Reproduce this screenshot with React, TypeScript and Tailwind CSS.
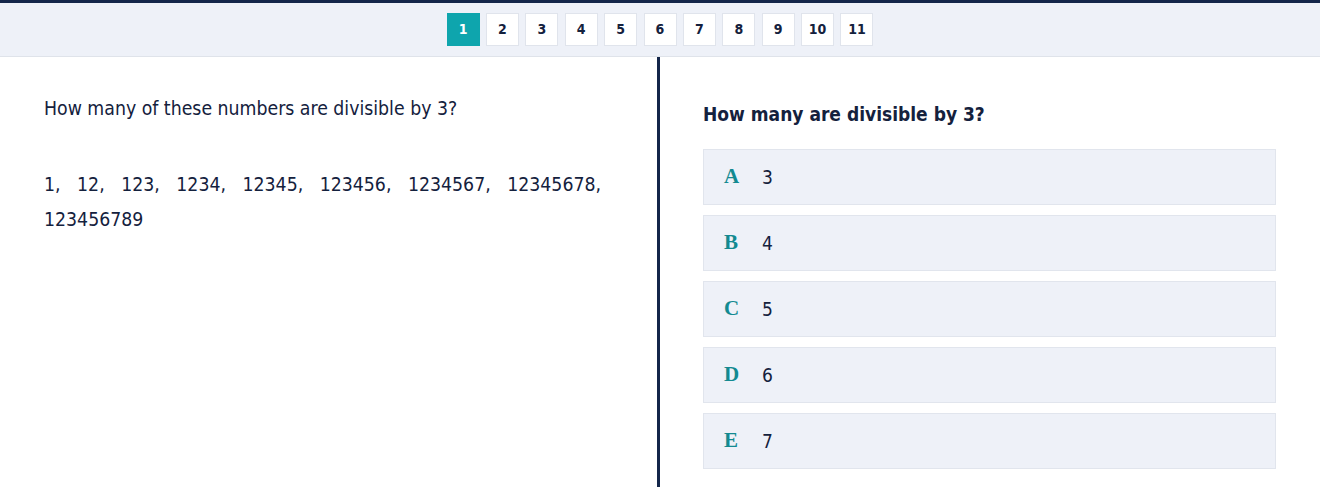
const pages = ["1", "2", "3", "4", "5", "6", "7", "8", "9", "10", "11"];

const options = [
  { letter: "A", value: "3" },
  { letter: "B", value: "4" },
  { letter: "C", value: "5" },
  { letter: "D", value: "6" },
  { letter: "E", value: "7" },
];

const numbers = ["1", "12", "123", "1234", "12345", "123456", "1234567", "12345678", "123456789"];

const sans = "font-['DejaVu_Sans_Condensed','DejaVu_Sans',sans-serif]";

export default function App() {
  return (
    <div className={`h-[487px] w-full overflow-hidden border-t-[3px] border-[#14264a] bg-white text-[#14213d] ${sans}`}>
      {/* Page navigation */}
      <div className="flex h-[54px] items-center justify-center gap-[6.4px] border-b border-[#dfe3ea] bg-[#eef1f8]">
        {pages.map((p) => (
          <button
            key={p}
            type="button"
            className={
              p === "1"
                ? "flex h-[33px] w-[33px] items-center justify-center border border-[#0ea5ad] bg-[#0ea5ad] text-[14px] font-bold text-white"
                : "flex h-[33px] w-[33px] items-center justify-center border border-[#e0e4ec] bg-white text-[14px] font-bold text-[#14213d]"
            }
          >
            {p}
          </button>
        ))}
      </div>

      <div className="flex h-full">
        {/* Question */}
        <div className="w-[657px] shrink-0 pl-[44px] pr-[20px] pt-[38px]">
          <p className="text-[19.3px] leading-[28px]">How many of these numbers are divisible by 3?</p>
          <p className="mt-[44px] text-[19.3px] leading-[35px]">
            {numbers.map((n, i) => (
              <span key={n}>
                {n}
                {i < numbers.length - 1 ? ",\u00a0\u00a0 " : ""}
              </span>
            ))}
          </p>
        </div>

        <div className="w-[3px] shrink-0 bg-[#14264a]" />

        {/* Answers */}
        <div className="flex-1 pl-[43px] pr-[44px] pt-[42px]">
          <h2 className="text-[19px] font-bold leading-[30px]">How many are divisible by 3?</h2>
          <div className="mt-[20px] flex flex-col gap-[10px]">
            {options.map((o) => (
              <div
                key={o.letter}
                className="flex h-[56px] items-center border border-[#e1e5ed] bg-[#eef1f8] pl-[20px]"
              >
                <span className="w-[38px] font-['Liberation_Serif','DejaVu_Serif',serif] text-[21px] font-bold text-[#138a91]">
                  {o.letter}
                </span>
                <span className="text-[19px]">{o.value}</span>
              </div>
            ))}
          </div>
        </div>
      </div>
    </div>
  );
}
